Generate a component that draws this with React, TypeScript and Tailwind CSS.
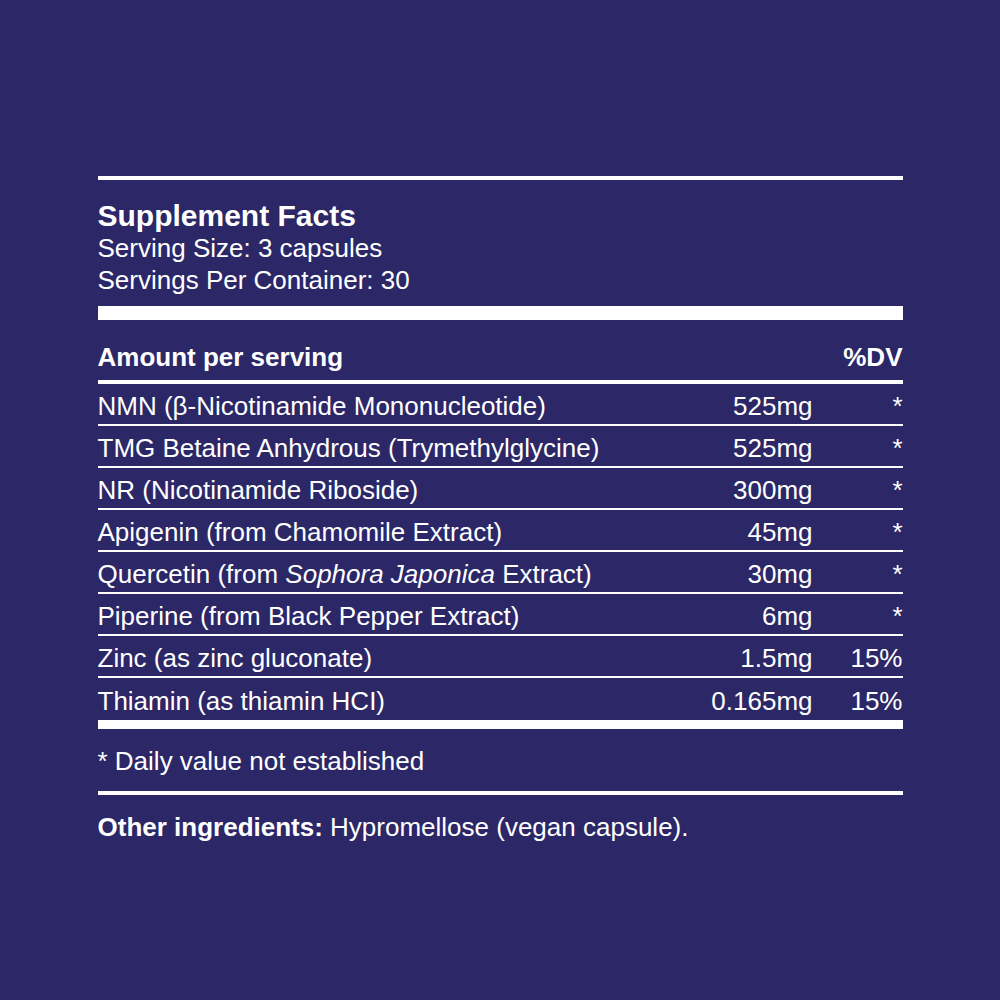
const rows: { name: React.ReactNode; amount: string; dv: string }[] = [
  { name: "NMN (β-Nicotinamide Mononucleotide)", amount: "525mg", dv: "*" },
  { name: "TMG Betaine Anhydrous (Trymethylglycine)", amount: "525mg", dv: "*" },
  { name: "NR (Nicotinamide Riboside)", amount: "300mg", dv: "*" },
  { name: "Apigenin (from Chamomile Extract)", amount: "45mg", dv: "*" },
  {
    name: (
      <>
        Quercetin (from <i>Sophora Japonica</i> Extract)
      </>
    ),
    amount: "30mg",
    dv: "*",
  },
  { name: "Piperine (from Black Pepper Extract)", amount: "6mg", dv: "*" },
  { name: "Zinc (as zinc gluconate)", amount: "1.5mg", dv: "15%" },
  { name: "Thiamin (as thiamin HCI)", amount: "0.165mg", dv: "15%" },
];

export default function App() {
  return (
    <div className="w-full min-h-[1000px] bg-[#2c2767] text-white font-['Liberation_Sans',Arial,sans-serif] pt-[176px]">
      <div className="mx-auto w-[805px]">
        <div className="h-[4px] bg-white"></div>
        <div className="pt-[20px] leading-[32px] text-[26px]">
          <h1 className="text-[30px] font-bold">Supplement Facts</h1>
          <p>Serving Size: 3 capsules</p>
          <p>Servings Per Container: 30</p>
        </div>
        <div className="h-[14px] bg-white mt-[10px]"></div>
        <div className="h-[64px] flex items-end justify-between pb-[10px] border-b-4 border-white text-[26px] font-bold leading-[26px]">
          <span>Amount per serving</span>
          <span>%DV</span>
        </div>
        {rows.map((r, i) => (
          <div
            key={i}
            className={
              "h-[42px] pt-[4px] flex items-center text-[26px] leading-[30px] " +
              (i < rows.length - 1 ? "border-b-2 border-white" : "")
            }
          >
            <span className="flex-1 whitespace-nowrap">{r.name}</span>
            <span className="text-right">{r.amount}</span>
            <span className="w-[90px] text-right">{r.dv}</span>
          </div>
        ))}
        <div className="h-[9px] bg-white"></div>
        <p className="mt-[16px] text-[26px] leading-[32px]">* Daily value not established</p>
        <div className="h-[4px] bg-white mt-[14px]"></div>
        <p className="mt-[16px] text-[26px] leading-[32px]">
          <b>Other ingredients:</b> Hypromellose (vegan capsule).
        </p>
      </div>
    </div>
  );
}
